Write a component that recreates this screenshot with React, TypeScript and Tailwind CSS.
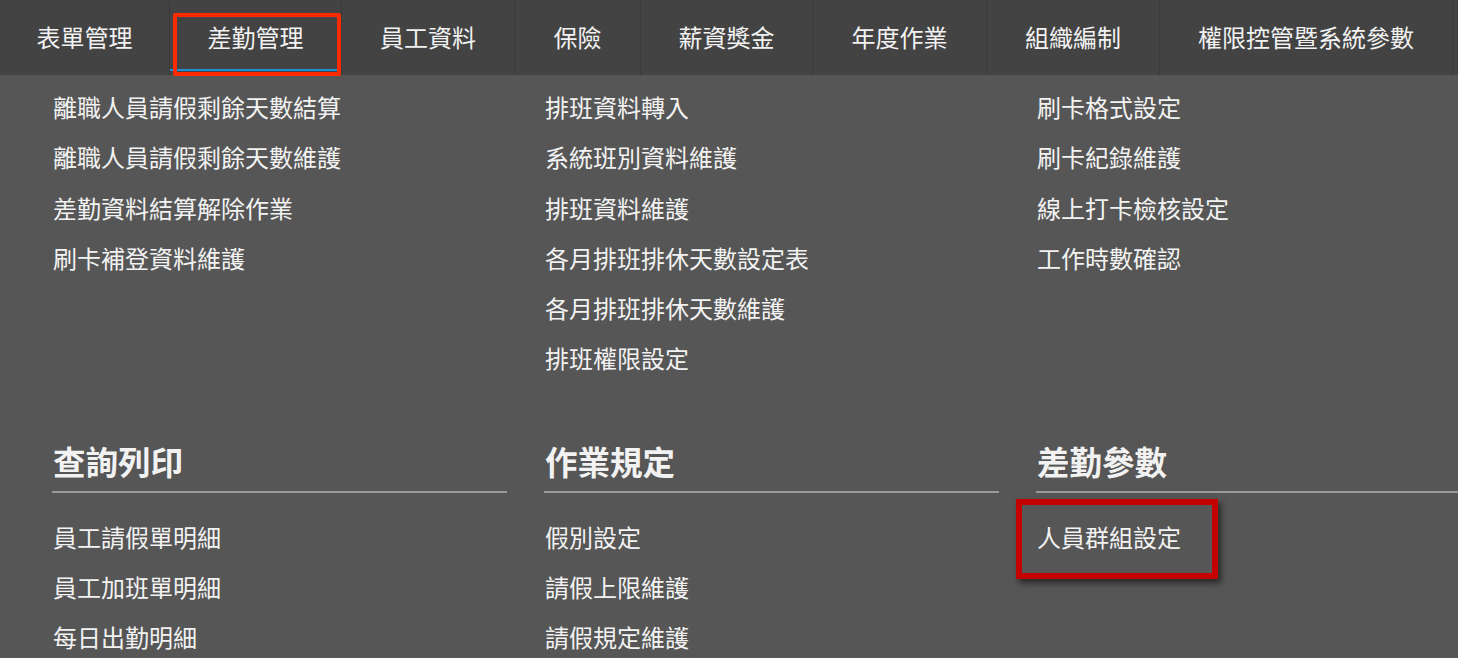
import React from 'react';

const tabs = [
    { label: '表單管理', w: 'w-[170px]' },
    { label: '差勤管理', w: 'w-[172px]', active: true },
    { label: '員工資料', w: 'w-[173px]' },
    { label: '保險', w: 'w-[126px]' },
    { label: '薪資獎金', w: 'w-[172px]' },
    { label: '年度作業', w: 'w-[174px]' },
    { label: '組織編制', w: 'w-[173px]' },
    { label: '權限控管暨系統參數', w: 'w-[293px]' },
];

const topCols = [
    ['離職人員請假剩餘天數結算', '離職人員請假剩餘天數維護', '差勤資料結算解除作業', '刷卡補登資料維護'],
    ['排班資料轉入', '系統班別資料維護', '排班資料維護', '各月排班排休天數設定表', '各月排班排休天數維護', '排班權限設定'],
    ['刷卡格式設定', '刷卡紀錄維護', '線上打卡檢核設定', '工作時數確認'],
];

const bottomCols = [
    { title: '查詢列印', items: ['員工請假單明細', '員工加班單明細', '每日出勤明細'] },
    { title: '作業規定', items: ['假別設定', '請假上限維護', '請假規定維護'] },
    { title: '差勤參數', items: ['人員群組設定'], boxed: true },
];

export default function App() {
    return (
        <div
            className="w-[1458px] h-[658px] overflow-hidden bg-[#565656] text-[#f2f2f2]"
            style={{ fontFamily: '"Noto Sans CJK TC", "Noto Sans", sans-serif' }}
        >
            {/* Top nav */}
            <nav className="flex h-[75px] bg-[#434343]">
                {tabs.map((t) => (
                    <div
                        key={t.label}
                        className={`${t.w} relative flex items-center justify-center border-r border-[#3a3a3a] text-[24px] pb-[2px]`}
                    >
                        {t.label}
                        {t.active && (
                            <>
                                <div className="absolute left-0 right-[4px] bottom-[4px] h-[2px] bg-[#1e90d6]" />
                                <div className="absolute left-[3px] right-0 top-[13px] bottom-[-1px] border-[4px] border-[#ff2a00] rounded-[2px]" />
                            </>
                        )}
                    </div>
                ))}
            </nav>

            {/* Menu body */}
            <div className="pl-[52px] pt-[7px]">
                <div className="flex">
                    {topCols.map((col, i) => (
                        <ul key={i} className="w-[492px] pr-[37px] shrink-0">
                            {col.map((item) => (
                                <li key={item} className="h-[50.3px] leading-[50px] text-[24px] pl-[1px]">
                                    {item}
                                </li>
                            ))}
                        </ul>
                    ))}
                </div>

                <div className="flex mt-[57px]">
                    {bottomCols.map((col) => (
                        <div key={col.title} className="w-[492px] pr-[37px] shrink-0">
                            <h3 className="text-[32.5px] font-bold leading-[40px] pl-[1px] pb-[10px] border-b-2 border-[#9a9a9a]">
                                {col.title}
                            </h3>
                            <ul className="pt-[19px]">
                                {col.items.map((item) => (
                                    <li key={item} className="relative h-[50.3px] leading-[50px] text-[24px] pl-[1px]">
                                        {item}
                                        {col.boxed && (
                                            <div className="absolute left-[-20px] top-[-13px] w-[202px] h-[80px] border-[6px] border-[#c40000] shadow-[3px_4px_6px_rgba(0,0,0,0.55)]" />
                                        )}
                                    </li>
                                ))}
                            </ul>
                        </div>
                    ))}
                </div>
            </div>
        </div>
    );
}
